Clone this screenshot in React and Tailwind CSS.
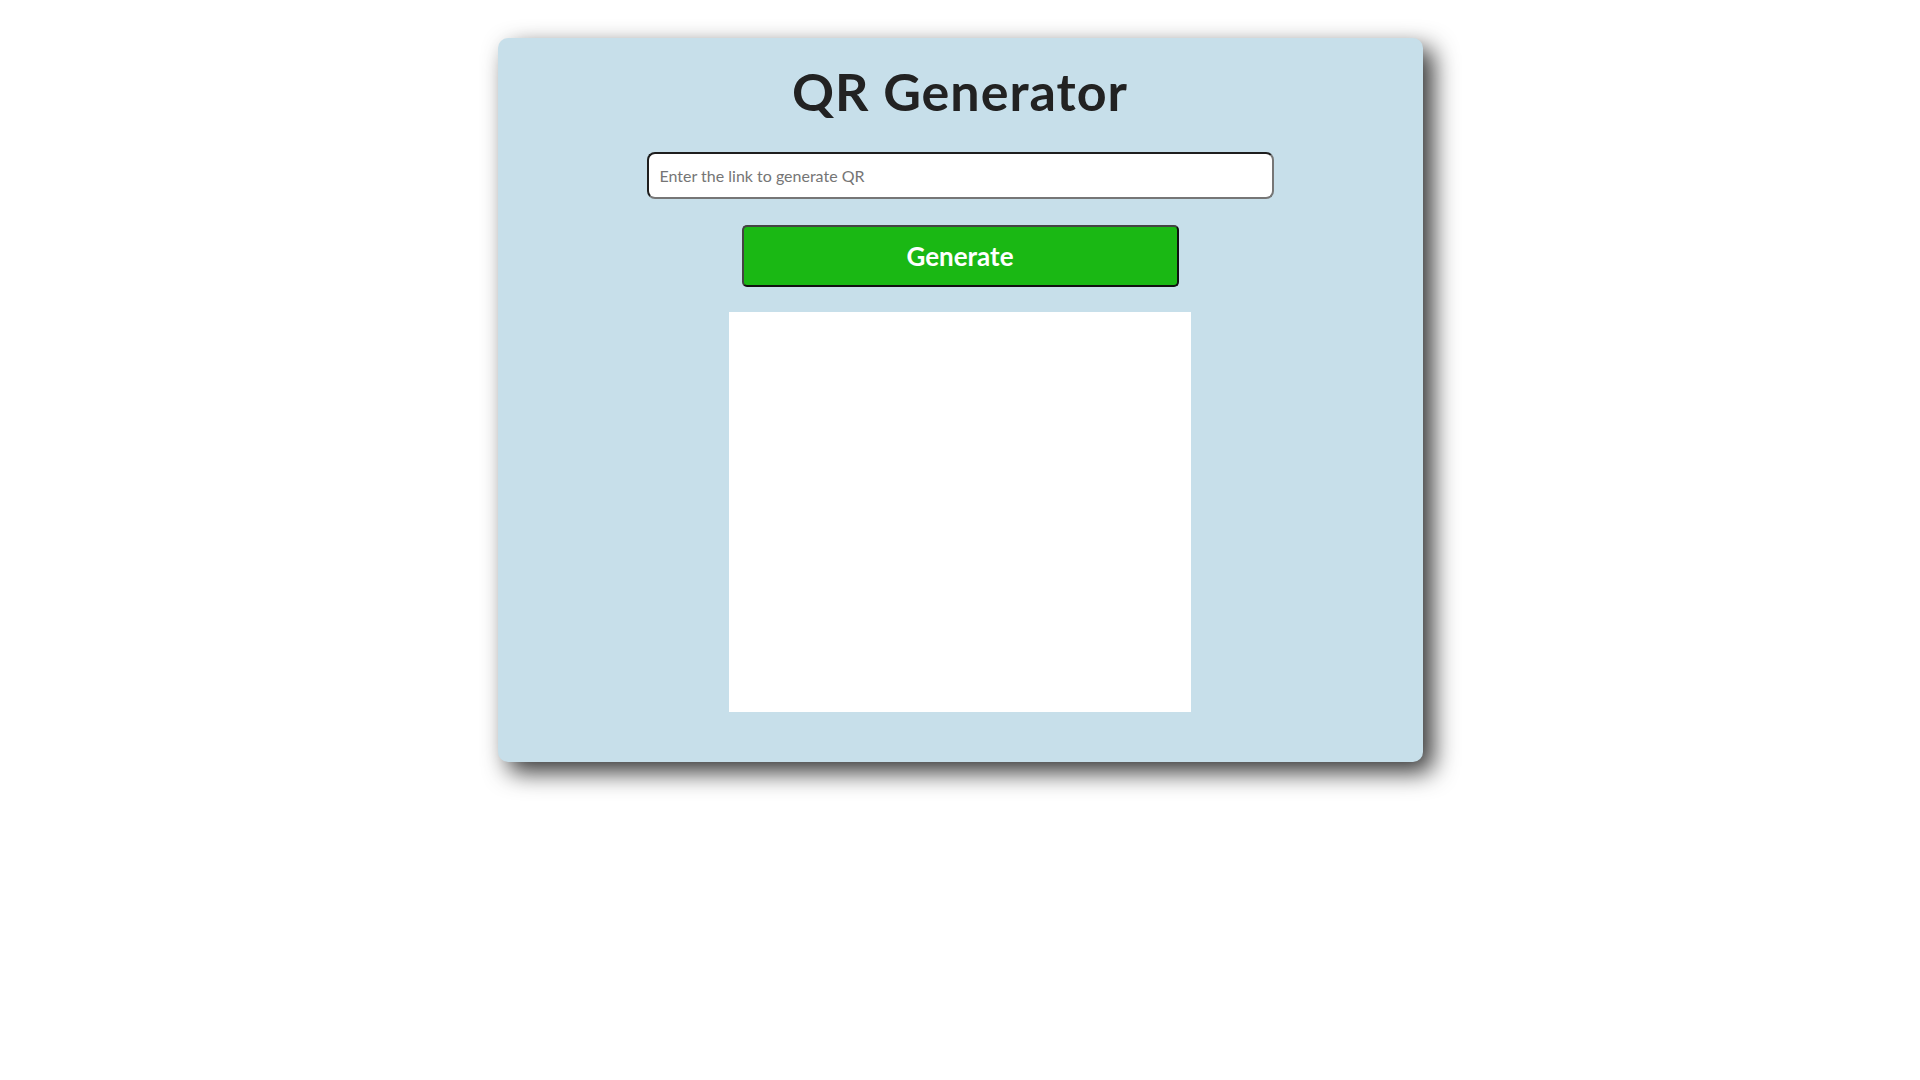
export default function App() {
  return (
    <div className="min-h-screen bg-white pt-[38px]" style={{ fontFamily: "Lato, 'Open Sans', sans-serif" }}>
      <div className="mx-auto flex h-[724px] w-[925px] flex-col items-center rounded-[10px] bg-[#c7dfea] shadow-[10px_10px_24px_rgba(0,0,0,0.8)]">
        <h1 className="mt-[23px] h-[60px] text-[52px] font-bold leading-[60px] tracking-[1px] text-[#222222]">QR Generator</h1>
        <input
          type="text"
          placeholder="Enter the link to generate QR"
          className="mt-[31px] h-[47px] w-[627px] rounded-[8px] border-2 border-t-[#1e1e1e] border-l-[#1e1e1e] border-r-[#767676] border-b-[#767676] bg-white px-[11px] text-[16px] text-[#222] outline-none placeholder:text-[#757575]"
        />
        <button className="mt-[26px] h-[62px] w-[437px] rounded-[5px] border-2 border-t-[#444] border-l-[#444] border-r-[#111] border-b-[#111] bg-[#1ab814] text-[26px] font-bold text-white">
          Generate
        </button>
        <div className="mt-[25px] h-[400px] w-[462px] bg-white" />
      </div>
    </div>
  );
}
